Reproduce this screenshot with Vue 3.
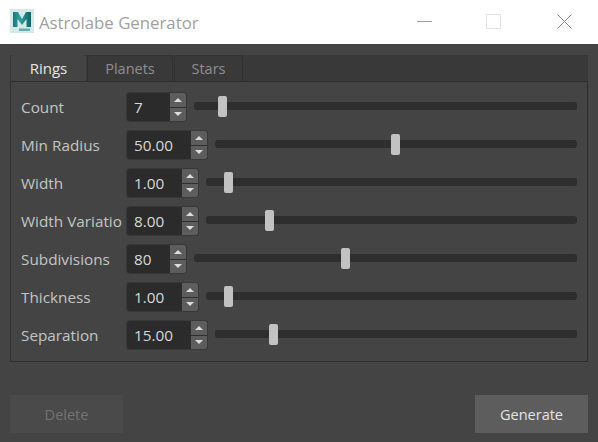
<script setup>
const rows = [
  { label: 'Count', value: '7', w: 42, thumb: 24 },
  { label: 'Min Radius', value: '50.00', w: 63, thumb: 176 },
  { label: 'Width', value: '1.00', w: 54, thumb: 18 },
  { label: 'Width Variatio', value: '8.00', w: 54, thumb: 59 },
  { label: 'Subdivisions', value: '80', w: 42, thumb: 147 },
  { label: 'Thickness', value: '1.00', w: 54, thumb: 18 },
  { label: 'Separation', value: '15.00', w: 63, thumb: 54 }
]
</script>

<template>
  <div class="window">
    <header class="titlebar">
      <svg class="logo" width="24" height="24" viewBox="0 0 24 24">
        <defs>
          <linearGradient id="mg" x1="0" y1="0" x2="1" y2="0">
            <stop offset="0" stop-color="#17797c" />
            <stop offset="0.4" stop-color="#35a09d" />
            <stop offset="1" stop-color="#0b6369" />
          </linearGradient>
        </defs>
        <rect width="24" height="24" fill="#d5e9e8" />
        <path d="M3 18V3h5l4 7 4-7h5v15h-4.500V10L12 16 7.500 10v8z" fill="url(#mg)" />
        <rect x="9" y="19.500" width="11" height="2.500" fill="#6aa9ad" />
      </svg>
      <span class="title">Astrolabe Generator</span>
      <div class="controls">
        <svg width="16" height="16" viewBox="0 0 16 16"><path d="M0 7.500H15" stroke="#a0a0a0" fill="none" /></svg>
        <svg width="16" height="16" viewBox="0 0 16 16"><rect x="0.500" y="0.500" width="14" height="14" stroke="#e3e3e3" fill="none" /></svg>
        <svg width="16" height="16" viewBox="0 0 16 16"><path d="M0.500 0.500L14.500 14.500M14.500 0.500L0.500 14.500" stroke="#8c8c8c" fill="none" /></svg>
      </div>
    </header>

    <main class="body">
      <div class="tabs">
        <div class="tab active">Rings</div>
        <div class="tab plain t2">Planets</div>
        <div class="tab plain t3">Stars</div>
      </div>
      <section class="panel">
        <div v-for="r in rows" :key="r.label" class="row">
          <span class="label">{{ r.label }}</span>
          <div class="spin">
            <div class="field" :style="{ width: r.w + 'px' }">{{ r.value }}</div>
            <div class="arrows">
              <div class="arrow"><i class="up"></i></div>
              <div class="arrow"><i class="down"></i></div>
            </div>
          </div>
          <div class="slider">
            <div class="thumb" :style="{ left: r.thumb + 'px' }"></div>
          </div>
        </div>
      </section>
      <footer class="actions">
        <button class="btn disabled">Delete</button>
        <button class="btn primary">Generate</button>
      </footer>
    </main>
  </div>
</template>

<style>
html, body { margin: 0; background: #444; }
</style>

<style scoped>
.window {
  width: 598px;
  height: 442px;
  display: flex;
  flex-direction: column;
  overflow: hidden;
  font-family: "Open Sans", "Noto Sans", sans-serif;
  font-size: 15px;
  color: #c8c8c8;
}
.titlebar {
  height: 44px;
  background: #fff;
  display: flex;
  align-items: center;
  padding-left: 10px;
  flex: none;
}
.logo { margin-right: 5px; margin-bottom: 2px; }
.title { font-size: 16.800px; color: #a0a0a0; }
.controls {
  margin-left: auto;
  display: flex;
  gap: 53px;
  padding-right: 25px;
  align-items: center;
}
.controls svg:last-child { margin-left: 2px; }
.body {
  flex: 1;
  background: #444;
  padding: 11px 10px 9px;
  display: flex;
  flex-direction: column;
}
.tabs {
  height: 26px;
  background: #393939;
  display: flex;
  padding-left: 1px;
  gap: 1px;
  flex: none;
}
.tab {
  line-height: 27px;
  text-align: center;
  border-radius: 3px 3px 0 0;
  box-sizing: border-box;
}
.active { width: 75px; background: #444; color: #e6e6e6; }
.plain {
  background: #393939;
  color: #8f8f8f;
  border: 1px solid #313131;
  border-bottom: none;
  line-height: 26px;
  font-size: 14.500px;
}
.t2 { width: 86px; }
.t3 { width: 69px; }
.panel {
  height: 281px;
  box-sizing: border-box;
  border: 1px solid #2e2e2e;
  padding: 10px 10px 0 10px;
  flex: none;
  display: flex;
  flex-direction: column;
  gap: 8px;
}
.row {
  height: 30px;
  display: flex;
  align-items: center;
  flex: none;
}
.label {
  width: 105px;
  flex: none;
  white-space: nowrap;
  overflow: hidden;
  color: #c4c4c4;
  font-size: 15.300px;
}
.spin {
  display: flex;
  height: 30px;
  flex: none;
  box-sizing: border-box;
  border-radius: 3px;
  border: 1px solid #383838;
}
.field {
  box-sizing: border-box;
  background: #2b2b2b;
  border-radius: 3px 0 0 3px;
  padding-left: 7px;
  line-height: 28px;
  font-size: 15.300px;
  color: #d8d8d8;
}
.arrows {
  width: 16px;
  display: flex;
  flex-direction: column;
  gap: 1px;
  background: #2e2e2e;
  border-left: 1px solid #2e2e2e;
}
.arrow {
  flex: 1;
  background: #5d5d5d;
  display: flex;
  align-items: center;
  justify-content: center;
}
.arrow:first-child { border-radius: 0 2px 0 0; }
.arrow:last-child { border-radius: 0 0 2px 0; }
.up, .down {
  width: 0;
  height: 0;
  border-left: 4px solid transparent;
  border-right: 4px solid transparent;
}
.up { border-bottom: 4px solid #dcdcdc; }
.down { border-top: 4px solid #dcdcdc; }
.slider {
  flex: 1;
  margin: 0 0 2px 7px;
  height: 8px;
  background: #2e2e2e;
  border-radius: 3px;
  position: relative;
}
.thumb {
  position: absolute;
  top: -6px;
  width: 9px;
  height: 21px;
  background: #c2c2c2;
  border-radius: 2px;
}
.actions {
  margin-top: auto;
  display: flex;
  justify-content: space-between;
}
.btn {
  width: 113px;
  height: 38px;
  border: none;
  font: inherit;
  font-size: 14.500px;
  padding: 0;
}
.disabled { background: #4a4a4a; color: #737373; }
.primary { background: #5d5d5d; color: #e4e4e4; }
</style>
